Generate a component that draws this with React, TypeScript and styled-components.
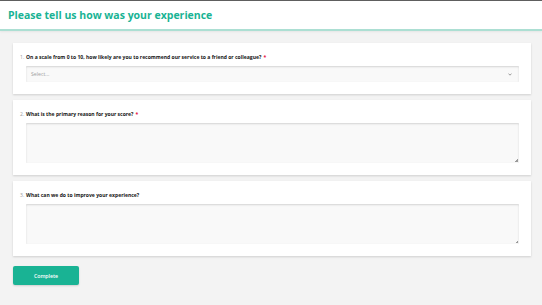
import styled, { createGlobalStyle } from "styled-components";

const GlobalStyle = createGlobalStyle`
  html, body {
    margin: 0;
    padding: 0;
    background: #f3f3f3;
    font-family: "Open Sans", "DejaVu Sans", sans-serif;
  }
  * {
    box-sizing: border-box;
  }
`;

const Page = styled.div`
  min-height: 305px;
  border-top: 1px solid #5f5f5f;
  background: #f3f3f3;
`;

const Header = styled.header`
  height: 30px;
  display: flex;
  align-items: center;
  padding: 0 8px 1px;
  background: #fff;
  border-bottom: 2px solid #acdfd3;
  box-shadow: 0 1px 2px rgba(0, 0, 0, 0.06);
`;

const Title = styled.h1`
  margin: 0;
  font-size: 10.5px;
  font-weight: 700;
  color: #19b394;
`;

const Body = styled.main`
  display: flex;
  flex-direction: column;
  gap: 6px;
  padding: 12px 11px 0 13px;
`;

const Panel = styled.section`
  background: #fff;
  box-shadow: 0 1px 2px rgba(0, 0, 0, 0.15);
  padding: 10px 12px 12px 7px;
  display: flex;
  flex-direction: column;
  gap: 5px;
`;

const QuestionTitle = styled.div`
  display: flex;
  align-items: center;
  height: 8px;
  font-size: 5.05px;
  font-weight: 700;
  color: #161616;
`;

const Num = styled.span`
  width: 6px;
  font-weight: 400;
  color: #9a9a9a;
`;

const Required = styled.span`
  margin-left: 2px;
  color: #e60a3e;
`;

const Dropdown = styled.div`
  margin-left: 6px;
  height: 16px;
  display: flex;
  align-items: center;
  justify-content: space-between;
  padding: 0 7px 0 5px;
  background: #f9f9f9;
  border-radius: 1px;
  box-shadow: inset 0 1px 2px rgba(0, 0, 0, 0.15);
  font-size: 5.2px;
  color: #a0a0a0;
`;

const TextBox = styled.div`
  position: relative;
  margin-left: 6px;
  height: 40px;
  &::after {
    content: "";
    position: absolute;
    right: 1px;
    bottom: 1px;
    width: 3px;
    height: 3px;
    background: linear-gradient(135deg, transparent 50%, #9a9a9a 50%);
  }
`;

const TextArea = styled.textarea`
  display: block;
  width: 100%;
  height: 100%;
  resize: none;
  border: none;
  outline: none;
  background: #f9f9f9;
  border-radius: 1px;
  box-shadow: inset 0 1px 2px rgba(0, 0, 0, 0.15);
  font-family: inherit;
  font-size: 5.2px;
`;

const Footer = styled.div`
  padding: 10px 13px 0;
`;

const Button = styled.button`
  display: block;
  width: 66px;
  height: 19px;
  border: none;
  border-radius: 2px;
  background: #19b394;
  box-shadow: 0 1px 2px rgba(0, 0, 0, 0.15);
  color: #fff;
  font-family: inherit;
  font-size: 5.2px;
  font-weight: 600;
  cursor: pointer;
`;

const questions = [
  {
    title:
      "On a scale from 0 to 10, how likely are you to recommend our service to a friend or colleague?",
    required: true,
    kind: "select",
  },
  { title: "What is the primary reason for your score?", required: true, kind: "text" },
  { title: "What can we do to improve your experience?", required: false, kind: "text" },
];

function Chevron() {
  return (
    <svg width="4" height="3" viewBox="0 0 4 3">
      <path d="M0.5 0.6 L2 2.2 L3.5 0.6" fill="none" stroke="#909090" strokeWidth="0.9" />
    </svg>
  );
}

export default function App() {
  return (
    <Page>
      <GlobalStyle />
      <Header>
        <Title>Please tell us how was your experience</Title>
      </Header>
      <Body>
        {questions.map((q, i) => (
          <Panel key={q.title}>
            <QuestionTitle>
              <Num>{i + 1}.</Num>
              {q.title}
              {q.required && <Required>*</Required>}
            </QuestionTitle>
            {q.kind === "select" ? (
              <Dropdown>
                Select...
                <Chevron />
              </Dropdown>
            ) : (
              <TextBox>
                <TextArea />
              </TextBox>
            )}
          </Panel>
        ))}
      </Body>
      <Footer>
        <Button>Complete</Button>
      </Footer>
    </Page>
  );
}
